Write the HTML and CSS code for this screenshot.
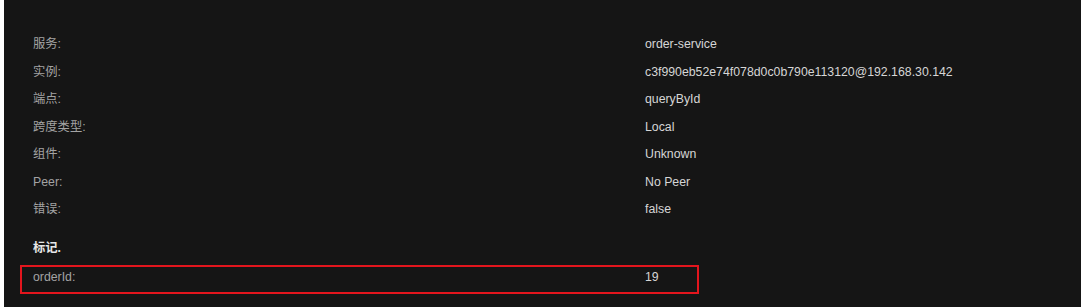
FILE: index.html
```html
<!DOCTYPE html>
<html lang="zh">
<head>
<meta charset="utf-8">
<link rel="stylesheet" href="styles.css">
</head>
<body>
<div class="panel">
  <div class="rows">
    <div class="row"><span class="label">服务:</span><span class="value">order-service</span></div>
    <div class="row"><span class="label">实例:</span><span class="value">c3f990eb52e74f078d0c0b790e113120@192.168.30.142</span></div>
    <div class="row"><span class="label">端点:</span><span class="value">queryById</span></div>
    <div class="row"><span class="label">跨度类型:</span><span class="value">Local</span></div>
    <div class="row"><span class="label">组件:</span><span class="value">Unknown</span></div>
    <div class="row"><span class="label">Peer:</span><span class="value">No Peer</span></div>
    <div class="row"><span class="label">错误:</span><span class="value">false</span></div>
  </div>
  <div class="tags-title">标记.</div>
  <div class="tag-box">
    <div class="row tag-row"><span class="label">orderId:</span><span class="value">19</span></div>
  </div>
</div>
</body>
</html>
```
FILE: styles.css
```css
html, body {
  margin: 0;
  padding: 0;
  background: #ffffff;
}
body {
  font-family: "Liberation Sans", Arial, "Noto Sans CJK SC", sans-serif;
  font-size: 12.3px;
}
.panel {
  margin-left: 4px;
  width: 1077px;
  height: 307px;
  background: #151515;
  box-sizing: border-box;
  padding: 31px 0 0 29px;
}
.rows {
  display: flex;
  flex-direction: column;
}
.row {
  display: flex;
  height: 27.5px;
  line-height: 27.5px;
}
.label {
  width: 612px;
  flex: none;
  color: #a3a3a3;
}
.value {
  color: #d6d6d6;
}
.tags-title {
  margin-top: 11.5px;
  height: 27.5px;
  line-height: 27.5px;
  color: #e6e6e6;
  font-weight: bold;
}
.tag-box {
  margin-top: 2px;
  margin-left: -13px;
  width: 679px;
  height: 29px;
  box-sizing: border-box;
  border: 2px solid #e3151d;
  padding: 2px 0 0 11px;
}
.tag-row {
  height: 16px;
  line-height: 16px;
}
```
